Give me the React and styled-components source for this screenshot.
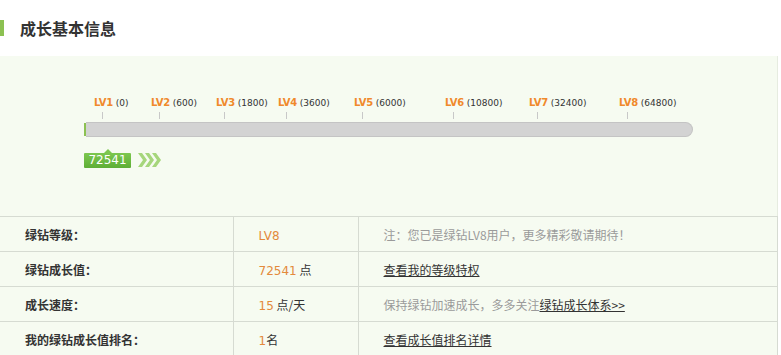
import React from "react";
import styled, { createGlobalStyle } from "styled-components";

const Global = createGlobalStyle`
  html, body { margin: 0; padding: 0; background: #fff; }
  body { font-family: "Liberation Sans", "Noto Sans CJK SC", sans-serif; font-size: 12px; color: #333; }
`;

const Page = styled.div`
  width: 781px;
`;

const Header = styled.div`
  height: 56px;
  display: flex;
  align-items: center;
`;

const Mark = styled.span`
  width: 4px;
  height: 16px;
  background: #8cc152;
  margin-top: 0px;
`;

const Title = styled.h2`
  margin: 0 0 0 16px;
  font: bold 16px "Noto Sans CJK SC", sans-serif;
  color: #333;
`;

const Panel = styled.div`
  width: 777px;
  background: #f6fbf1;
  border-right: 1px solid #e6ece0;
`;

const ScaleArea = styled.div`
  height: 160px;
  box-sizing: border-box;
  padding: 40px 0 0 84px;
`;

const Marks = styled.div`
  position: relative;
  width: 609px;
  height: 26px;
`;

const MarkItem = styled.div`
  position: absolute;
  top: 0;
  white-space: nowrap;
  line-height: 12px;
`;

const Lv = styled.span`
  font: bold 10px "DejaVu Sans", sans-serif;
  color: #f0892b;
  letter-spacing: -0.3px;
`;

const Need = styled.span`
  font: 9px "DejaVu Sans", sans-serif;
  color: #333;
  margin-left: 3px;
`;

const Tick = styled.span`
  position: absolute;
  top: 16px;
  width: 1px;
  height: 7px;
  background: #c8c8c8;
`;

const Track = styled.div`
  display: flex;
  width: 609px;
  height: 15px;
`;

const Edge = styled.span`
  width: 2px;
  background: #8cc152;
  margin: 1px 0;
`;

const Bar = styled.div`
  flex: 1;
  box-sizing: border-box;
  background: #d3d3d3;
  border: 1px solid #c4c4c4;
  border-left: none;
  border-radius: 0 8px 8px 0;
`;

const BadgeRow = styled.div`
  display: flex;
  align-items: center;
  margin-top: 15px;
  gap: 7px;
`;

const Badge = styled.div`
  position: relative;
  width: 47px;
  height: 15px;
  background: linear-gradient(#7cc74f, #5eae36);
  border-radius: 1px;
  color: #fff;
  font: 12px "DejaVu Sans", sans-serif;
  line-height: 15px;
  text-align: center;
  &::before {
    content: "";
    position: absolute;
    left: 20px;
    top: -4px;
    border-left: 4px solid transparent;
    border-right: 4px solid transparent;
    border-bottom: 4px solid #7cc74f;
  }
`;

const Table = styled.table`
  width: 778px;
  border-collapse: collapse;
  table-layout: fixed;
`;

const Td = styled.td`
  height: 34px;
  padding: 0 0 0 25px;
  border-top: 1px solid #d6dbd2;
  border-bottom: 1px solid #d6dbd2;
  border-left: ${(p) => (p.$first ? "none" : "1px solid #d6dbd2")};
  border-right: ${(p) => (p.$last ? "1px solid #d6dbd2" : "none")};
  font: ${(p) => (p.$bold ? "bold" : "normal")} 12px "Noto Sans CJK SC", sans-serif;
  color: #333;
  white-space: nowrap;
`;

const Num = styled.span`
  color: #e38a3c;
  font-family: "DejaVu Sans", sans-serif;
  font-size: 12px;
`;

const Note = styled.span`
  color: #9a9a9a;
`;

const Link = styled.a`
  color: #333;
  text-decoration: underline;
`;

const levels = [
  ["LV1", 0, 18],
  ["LV2", 600, 75],
  ["LV3", 1800, 140],
  ["LV4", 3600, 202],
  ["LV5", 6000, 278],
  ["LV6", 10800, 369],
  ["LV7", 32400, 453],
  ["LV8", 64800, 543],
];

const Chevrons = () => (
  <svg width="23" height="16" viewBox="0 0 23 16">
    {[0, 7, 14].map((x) => (
      <path key={x} d={`M${x} 1 L${x + 4} 1 L${x + 9} 8 L${x + 4} 15 L${x} 15 L${x + 5} 8 Z`} fill="#a6d67c" />
    ))}
  </svg>
);

export default function App() {
  return (
    <Page>
      <Global />
      <Header>
        <Mark />
        <Title>成长基本信息</Title>
      </Header>
      <Panel>
        <ScaleArea>
          <Marks>
            {levels.map(([lv, n, x]) => (
              <React.Fragment key={lv}>
                <MarkItem style={{ left: x - 8 }}>
                  <Lv>{lv}</Lv>
                  <Need>({n})</Need>
                </MarkItem>
                <Tick style={{ left: x }} />
              </React.Fragment>
            ))}
          </Marks>
          <Track>
            <Edge />
            <Bar />
          </Track>
          <BadgeRow>
            <Badge>72541</Badge>
            <Chevrons />
          </BadgeRow>
        </ScaleArea>
        <Table>
          <colgroup>
            <col style={{ width: 233 }} />
            <col style={{ width: 125 }} />
            <col />
          </colgroup>
          <tbody>
            <tr>
              <Td $first $bold>绿钻等级：</Td>
              <Td><Num>LV8</Num></Td>
              <Td $last><Note>注：您已是绿钻LV8用户，更多精彩敬请期待！</Note></Td>
            </tr>
            <tr>
              <Td $first $bold>绿钻成长值：</Td>
              <Td><Num>72541</Num> 点</Td>
              <Td $last><Link href="#">查看我的等级特权</Link></Td>
            </tr>
            <tr>
              <Td $first $bold>成长速度：</Td>
              <Td><Num>15</Num> 点/天</Td>
              <Td $last><Note>保持绿钻加速成长，多多关注</Note><Link href="#">绿钻成长体系&gt;&gt;</Link></Td>
            </tr>
            <tr>
              <Td $first $bold>我的绿钻成长值排名：</Td>
              <Td><Num>1</Num>名</Td>
              <Td $last><Link href="#">查看成长值排名详情</Link></Td>
            </tr>
          </tbody>
        </Table>
      </Panel>
    </Page>
  );
}
